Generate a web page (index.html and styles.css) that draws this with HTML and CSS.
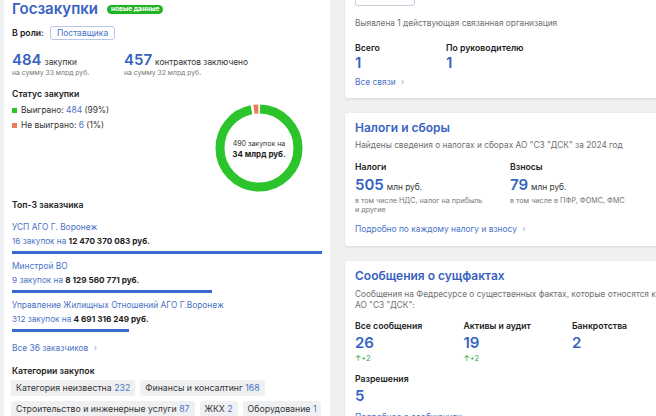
FILE: index.html
```html
<!DOCTYPE html>
<html lang="ru">
<head>
<meta charset="utf-8">
<link rel="stylesheet" href="styles.css">
</head>
<body>
<div class="page">
  <section class="card left">
    <div class="head">
      <h2 class="title big-title">Госзакупки</h2>
      <span class="badge">новые данные</span>
    </div>
    <div class="role"><span class="label">В роли:</span><span class="role-btn">Поставщика</span></div>
    <div class="stats">
      <div class="stat">
        <div class="num-line"><span class="num">484</span><span class="unit">закупки</span></div>
        <div class="sub">на сумму 33 млрд руб.</div>
      </div>
      <div class="stat">
        <div class="num-line"><span class="num">457</span><span class="unit">контрактов заключено</span></div>
        <div class="sub">на сумму 32 млрд руб.</div>
      </div>
    </div>
    <div class="status">
      <div class="status-list">
        <h3 class="label">Статус закупки</h3>
        <div class="legend"><i class="sq green"></i>Выиграно:&nbsp;<span class="link">484</span>&nbsp;(99%)</div>
        <div class="legend second"><i class="sq red"></i>Не выиграно:&nbsp;<span class="link">6</span>&nbsp;(1%)</div>
      </div>
      <div class="donut">
        <svg width="88" height="88" viewBox="0 0 88 88">
          <g transform="rotate(-90 44 44)">
            <circle cx="44" cy="44" r="39" fill="none" stroke="#2bc42b" stroke-width="9" stroke-dasharray="236 9.04" stroke-dashoffset="-1"/>
            <circle cx="44" cy="44" r="39" fill="none" stroke="#ec7a5c" stroke-width="9" stroke-dasharray="4.5 240.54" stroke-dashoffset="-239.5"/>
          </g>
        </svg>
        <div class="donut-text">
          <div class="donut-small">490 закупок на</div>
          <div class="donut-big">34 млрд руб.</div>
        </div>
      </div>
    </div>
    <h3 class="label top3">Топ-3 заказчика</h3>
    <div class="customer">
      <div class="link cname">УСП АГО Г. Воронеж</div>
      <div class="cinfo"><span class="link">16 закупок</span> на <b>12 470 370 083 руб.</b></div>
      <div class="bar" style="width:310px"></div>
    </div>
    <div class="customer">
      <div class="link cname">Минстрой ВО</div>
      <div class="cinfo"><span class="link">9 закупок</span> на <b>8 129 560 771 руб.</b></div>
      <div class="bar" style="width:200px"></div>
    </div>
    <div class="customer">
      <div class="link cname">Управление Жилищных Отношений АГО Г.Воронеж</div>
      <div class="cinfo"><span class="link">312 закупок</span> на <b>4 691 316 249 руб.</b></div>
      <div class="bar" style="width:117px"></div>
    </div>
    <div class="more link all36">Все 36 заказчиков <span class="chev">›</span></div>
    <h3 class="label cats">Категории закупок</h3>
    <div class="chips">
      <span class="chip">Категория неизвестна <span class="link">232</span></span>
      <span class="chip">Финансы и консалтинг <span class="link">168</span></span>
      <span class="chip">Строительство и инженерные услуги <span class="link">87</span></span>
      <span class="chip">ЖКХ <span class="link">2</span></span>
      <span class="chip">Оборудование <span class="link">1</span></span>
    </div>
  </section>

  <div class="right">
    <section class="card r1">
      <div class="btn-row"><span class="ghost-btn"></span></div>
      <p class="desc">Выявлена 1 действующая связанная организация</p>
      <div class="cols c1">
        <div class="col"><div class="label">Всего</div><div class="num">1</div></div>
        <div class="col"><div class="label">По руководителю</div><div class="num">1</div></div>
      </div>
      <div class="more link">Все связи <span class="chev">›</span></div>
    </section>

    <section class="card r2">
      <h2 class="title">Налоги и сборы</h2>
      <p class="desc">Найдены сведения о налогах и сборах АО "СЗ "ДСК" за 2024 год</p>
      <div class="cols c2">
        <div class="col">
          <div class="label">Налоги</div>
          <div class="num-line"><span class="num">505</span><span class="unit">млн руб.</span></div>
          <div class="tiny">в том числе НДС, налог на прибыль<br>и другие</div>
        </div>
        <div class="col">
          <div class="label">Взносы</div>
          <div class="num-line"><span class="num">79</span><span class="unit">млн руб.</span></div>
          <div class="tiny">в том числе в ПФР, ФОМС, ФМС</div>
        </div>
      </div>
      <div class="more link">Подробно по каждому налогу и взносу <span class="chev">›</span></div>
    </section>

    <section class="card r3">
      <h2 class="title">Сообщения о сущфактах</h2>
      <p class="desc">Сообщения на Федресурсе о существенных фактах, которые относятся к АО "СЗ "ДСК":</p>
      <div class="c3">
        <div class="col"><div class="label">Все сообщения</div><div class="num">26</div><div class="up">↑+2</div></div>
        <div class="col"><div class="label">Активы и аудит</div><div class="num">19</div><div class="up">↑+2</div></div>
        <div class="col"><div class="label">Банкротства</div><div class="num">2</div></div>
        <div class="col"><div class="label">Разрешения</div><div class="num">5</div></div>
      </div>
      <p class="more link last">Подробнее о сообщениях</p>
    </section>
  </div>
</div>
</body>
</html>
```

FILE: styles.css
```css
* { box-sizing: border-box; }
html, body {
  margin: 0;
  padding: 0;
  width: 656px;
  height: 416px;
  overflow: hidden;
  background: #eff0f2;
  font-family: Inter, "Noto Sans", sans-serif;
  color: #222;
}
.page {
  display: flex;
  gap: 15px;
  padding-left: 4px;
  margin-top: -19px;
  align-items: flex-start;
}
.card {
  background: #fff;
  border-radius: 3px;
}
.left {
  width: 326px;
  height: 460px;
  padding: 19px 8px 0 8px;
}
.right {
  width: 330px;
  flex: none;
  display: flex;
  flex-direction: column;
  gap: 15px;
}
.right .card {
  padding: 0 10px;
  box-shadow: 0 1px 3px rgba(0,0,0,0.10);
}
.head { display: flex; align-items: center; gap: 9px; height: 18px; }
.title {
  margin: 0;
  font-size: 12px;
  font-weight: 600;
  color: #3862c0;
  line-height: 16px;
}
.big-title { font-size: 15px; line-height: 18px; }
.badge {
  background: #20b520;
  color: #fff;
  font-size: 6.6px;
  font-weight: 700;
  border-radius: 5px;
  padding: 1px 4px;
  line-height: 7px;
}
.label {
  font-size: 8.7px;
  font-weight: 600;
  color: #222;
  margin: 0;
  line-height: 12px;
}
.link { color: #4a72c6; }
.role { display: flex; align-items: center; gap: 6px; margin-top: 8px; height: 14px; }
.role-btn {
  border: 1px solid #b9c8e6;
  border-radius: 3px;
  color: #4a72c6;
  font-size: 8.5px;
  padding: 0 6px;
  line-height: 12px;
}
.stats { display: flex; margin-top: 10px; }
.stat:first-child { width: 112px; }
.num-line { line-height: 18px; height: 18px; }
.num {
  font-size: 15px;
  font-weight: 600;
  color: #3563c2;
  line-height: 18px;
}
.unit { font-size: 8.3px; color: #333; margin-left: 3px; }
.sub { font-size: 6.8px; color: #777; line-height: 10px; }
.status { display: flex; margin-top: 10px; }
.legend {
  display: flex;
  align-items: center;
  font-size: 8.4px;
  color: #333;
  margin-top: 4px;
  line-height: 12px;
}
.legend.second { margin-top: 3px; }
.sq { width: 5px; height: 5px; margin-right: 4px; display: inline-block; }
.sq.green { background: #2bc42b; }
.sq.red { background: #ec7a5c; }
.donut {
  width: 88px;
  height: 88px;
  margin-top: 16px;
  margin-left: auto;
  margin-right: 19px;
  display: grid;
}
.donut svg, .donut-text { grid-area: 1 / 1; }
.donut-text {
  align-self: center;
  text-align: center;
  padding-top: 1px;
}
.donut-small { font-size: 7px; color: #333; line-height: 10px; }
.donut-big { font-size: 8px; font-weight: 700; color: #222; line-height: 10px; }
.top3 { margin-top: 7px; }
.customer { margin-top: 10px; }
.customer + .customer { margin-top: 6.5px; }
.cname { font-size: 8.4px; line-height: 12px; }
.cinfo { font-size: 8.2px; color: #4a72c6; margin-top: 1.5px; line-height: 12px; }
.cinfo b { color: #222; font-weight: 700; }
.bar { height: 3px; background: #3a6ad0; margin-top: 4px; }
.more { font-size: 8.4px; line-height: 12px; margin: 0; }
.all36 { margin-top: 10px; }
.chev { color: #8aa2d6; margin-left: 3px; }
.cats { margin-top: 11px; }
.chips { display: flex; flex-wrap: wrap; gap: 5px 5px; margin-top: 3px; margin-left: -1px; }
.chip {
  background: #eff0f2;
  border-radius: 3px;
  font-size: 8.75px;
  color: #333;
  padding: 0 5px;
  line-height: 16px;
}
.r1 { padding-top: 7px !important; padding-bottom: 10px !important; }
.btn-row { height: 18px; }
.ghost-btn {
  display: block;
  width: 60px;
  height: 18px;
  border: 1px solid #c8cfdc;
  border-radius: 3px;
}
.desc {
  margin: 0;
  font-size: 8.3px;
  color: #6f6f6f;
  line-height: 12px;
}
.r1 .desc { margin-top: 11px; }
.cols { display: flex; }
.c1 { margin-top: 13px; }
.c1 .col:first-child { width: 91px; }
.r1 .more { margin-top: 4px; }
.r2 { padding-top: 7px !important; padding-bottom: 11px !important; }
.r2 .desc { margin-top: 3px; }
.c2 { margin-top: 10px; }
.c2 .col { width: 155px; }
.c2 .num-line { margin-top: 2px; }
.tiny { font-size: 7.2px; color: #777; line-height: 9px; margin-top: 2.5px; }
.r2 .more { margin-top: 9.5px; }
.r3 { padding-top: 7px !important; padding-bottom: 10px; }
.r3 .desc { margin-top: 4.5px; line-height: 11px; }
.c3 {
  display: grid;
  grid-template-columns: repeat(3, 108.5px);
  margin-top: 9.5px;
  row-gap: 9px;
}
.c3 .num { display: block; margin-top: 2px; }
.c1 .num { display: block; }
.up { font-size: 7.5px; color: #2aaa2a; line-height: 10px; margin-top: 2px; }
.more.last { margin-top: 6px; }
```
